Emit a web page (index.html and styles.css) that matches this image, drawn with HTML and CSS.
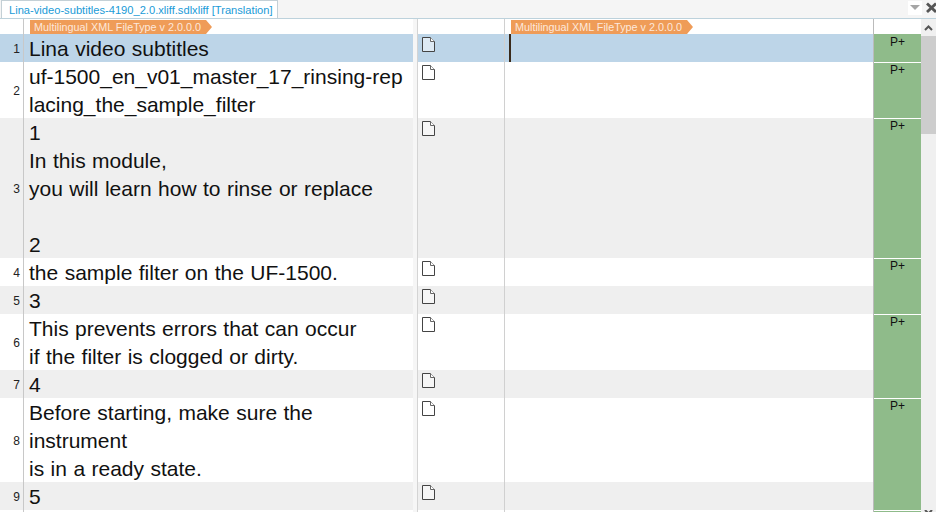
FILE: index.html
```html
<!DOCTYPE html>
<html lang="en">
<head>
    <meta charset="UTF-8">
    <title>Lina-video-subtitles-4190_2.0.xliff.sdlxliff [Translation]</title>
    <link rel="stylesheet" href="styles.css">
</head>
<body>
    <svg class="defs" width="0" height="0">
        <symbol id="doc" viewBox="0 0 13 15">
            <path d="M.5.5H8.5L12.5 4.5V14.5H.5Z" fill="currentColor" stroke="#444"/>
            <path d="M8.5.5V4.5H12.5" fill="#fff" stroke="#666"/>
        </symbol>
    </svg>

    <div class="tabbar">
        <div class="tab">Lina-video-subtitles-4190_2.0.xliff.sdlxliff [Translation]</div>
        <div class="tab-tools">
            <span class="tab-menu"><span class="tab-arrow"></span></span>
            <svg class="tab-close" width="10" height="11" viewBox="0 0 10 11">
                <path d="M1 1.5L10 10M10 1.5L1 10" stroke="#555" stroke-width="2.8"/>
            </svg>
        </div>
    </div>

    <div class="editor">
        <div class="grid">
            <div class="row row-head">
                <div class="num"></div>
                <div class="src"><span class="tag">Multilingual XML FileType v 2.0.0.0</span></div>
                <div class="gap"></div>
                <div class="status"></div>
                <div class="tgt"><span class="tag">Multilingual XML FileType v 2.0.0.0</span></div>
                <div class="match match-head"></div>
            </div>

            <div class="row row-active">
                <div class="num">1</div>
                <div class="src">Lina video subtitles</div>
                <div class="gap"></div>
                <div class="status"><svg class="doc"><use href="#doc"/></svg></div>
                <div class="tgt"><span class="caret"></span></div>
                <div class="match">P+</div>
            </div>
            <div class="row">
                <div class="num">2</div>
                <div class="src">uf-1500_en_v01_master_17_rinsing-rep<br>lacing_the_sample_filter</div>
                <div class="gap"></div>
                <div class="status"><svg class="doc"><use href="#doc"/></svg></div>
                <div class="tgt"></div>
                <div class="match">P+</div>
            </div>
            <div class="row row-alt">
                <div class="num">3</div>
                <div class="src">1<br>In this module,<br>you will learn how to rinse or replace<br><br>2</div>
                <div class="gap"></div>
                <div class="status"><svg class="doc"><use href="#doc"/></svg></div>
                <div class="tgt"></div>
                <div class="match">P+</div>
            </div>
            <div class="row">
                <div class="num">4</div>
                <div class="src">the sample filter on the UF-1500.</div>
                <div class="gap"></div>
                <div class="status"><svg class="doc"><use href="#doc"/></svg></div>
                <div class="tgt"></div>
                <div class="match">P+</div>
            </div>
            <div class="row row-alt">
                <div class="num">5</div>
                <div class="src">3</div>
                <div class="gap"></div>
                <div class="status"><svg class="doc"><use href="#doc"/></svg></div>
                <div class="tgt"></div>
                <div class="match match-cont"></div>
            </div>
            <div class="row">
                <div class="num">6</div>
                <div class="src">This prevents errors that can occur<br>if the filter is clogged or dirty.</div>
                <div class="gap"></div>
                <div class="status"><svg class="doc"><use href="#doc"/></svg></div>
                <div class="tgt"></div>
                <div class="match">P+</div>
            </div>
            <div class="row row-alt">
                <div class="num">7</div>
                <div class="src">4</div>
                <div class="gap"></div>
                <div class="status"><svg class="doc"><use href="#doc"/></svg></div>
                <div class="tgt"></div>
                <div class="match match-cont"></div>
            </div>
            <div class="row">
                <div class="num">8</div>
                <div class="src">Before starting, make sure the<br>instrument<br>is in a ready state.</div>
                <div class="gap"></div>
                <div class="status"><svg class="doc"><use href="#doc"/></svg></div>
                <div class="tgt"></div>
                <div class="match">P+</div>
            </div>
            <div class="row row-alt">
                <div class="num">9</div>
                <div class="src">5</div>
                <div class="gap"></div>
                <div class="status"><svg class="doc"><use href="#doc"/></svg></div>
                <div class="tgt"></div>
                <div class="match match-cont"></div>
            </div>
            <div class="row row-end">
                <div class="num"></div>
                <div class="src"></div>
                <div class="gap"></div>
                <div class="status"></div>
                <div class="tgt"></div>
                <div class="match"></div>
            </div>
        </div>

        <div class="scrollbar">
            <div>
                <svg class="scroll-arrow" width="15" height="17" viewBox="0 0 15 17">
                    <path d="M4 11L7.5 7.5L11 11" fill="none" stroke="#555" stroke-width="2"/>
                </svg>
                <div class="scroll-thumb"></div>
            </div>
            <svg class="scroll-arrow" width="15" height="2" viewBox="0 0 15 2">
                <path d="M4 0L7.5 3.5L11 0" fill="none" stroke="#555" stroke-width="2"/>
            </svg>
        </div>
    </div>
</body>
</html>
```

FILE: styles.css
```css
/* Reset */
* {
    margin: 0;
    padding: 0;
    box-sizing: border-box;
}

body {
    width: 936px;
    height: 512px;
    overflow: hidden;
    background: #fff;
    font-family: 'Liberation Sans', Arial, sans-serif;
}

.defs {
    display: block;
    height: 0;
}

/* Document tab */
.tabbar {
    display: flex;
    justify-content: space-between;
    height: 19px;
    padding-left: 1px;
    background: #f5f5f5;
    border-bottom: 1px solid #bdd2dc;
}

.tab {
    width: 277px;
    height: 18px;
    padding: 2px 0 0 7px;
    background: #fff;
    border: 1px solid #c4d0d6;
    border-bottom: none;
    color: #1a9bd7;
    font-size: 11.15px;
    line-height: 15px;
    white-space: nowrap;
}

.tab-tools {
    display: flex;
    align-items: flex-start;
    gap: 4px;
    padding-top: 1px;
}

.tab-menu {
    display: flex;
    justify-content: center;
    width: 14px;
    height: 14px;
    padding-top: 4px;
    background: #fff;
}

.tab-arrow {
    width: 0;
    height: 0;
    border-left: 5px solid transparent;
    border-right: 5px solid transparent;
    border-top: 5px solid #a5a5a5;
}

.tab-close {
    margin-top: 1px;
}

/* Segment grid */
.editor {
    display: flex;
    height: 493px;
    overflow: hidden;
}

.grid {
    width: 921px;
}

.row {
    display: flex;
    background: #fff;
}

.row-head {
    height: 15px;
}

.row-alt {
    background: #efefef;
}

.row-active {
    background: #bdd5e8;
}

.row-end {
    height: 2px;
    overflow: hidden;
}

.num {
    width: 24px;
    padding: 1px 3px 0 0;
    border-right: 1px solid #c8c8c8;
    display: flex;
    align-items: center;
    justify-content: flex-end;
    color: #222;
    font-size: 12px;
}

.src {
    width: 389px;
    padding: 1px 0 0 5px;
    margin-bottom: -1px;
    color: #111;
    font-size: 21px;
    line-height: 28px;
    word-spacing: 0.6px;
    white-space: nowrap;
}

.gap {
    width: 5px;
    background: #f6f6f6;
    border-right: 1px solid #d4d4d4;
}

.status {
    width: 87px;
    padding: 3px 0 0 4px;
    border-right: 1px solid #d0d0d0;
}

.doc {
    display: block;
    width: 13px;
    height: 15px;
    color: #fff;
}

.row-active .doc {
    color: #deeaf4;
}

.row-alt .doc {
    color: #f6f6f6;
}

.tgt {
    width: 369px;
    padding-left: 4px;
    border-right: 1px solid #bbb;
}

.row-active .tgt {
    height: 28px;
}

.caret {
    display: block;
    width: 2px;
    height: 28px;
    background: #3a2a1a;
}

.row-head .src {
    padding: 1px 0 0 6px;
    margin-bottom: 0;
    line-height: 14px;
    word-spacing: 0;
}

.row-head .tgt {
    padding: 1px 0 0 6px;
}

.tag {
    display: block;
    width: 182px;
    height: 14px;
    padding-left: 4px;
    background: #ef9c58;
    clip-path: polygon(0 0, 176px 0, 100% 50%, 176px 100%, 0 100%);
    color: #fde8dc;
    font-size: 10.8px;
    line-height: 14px;
    white-space: nowrap;
}

.match {
    width: 47px;
    padding-top: 1px;
    background: #8fbb8a;
    border-top: 1px solid #fff;
    text-align: center;
    color: #111;
    font-size: 12px;
    line-height: 13px;
}

.row-active .match {
    padding-top: 2px;
    border-top: none;
}

.row .match-cont {
    border-top: none;
}

.row-head .match-head {
    background: #fff;
    border-top: none;
}

.row-end .match {
    padding-top: 0;
}

/* Scrollbar */
.scrollbar {
    display: flex;
    flex-direction: column;
    justify-content: space-between;
    width: 15px;
    background: #f0f0f0;
}

.scroll-arrow {
    display: block;
}

.scroll-thumb {
    height: 98px;
    background: #cdcdcd;
}
```
